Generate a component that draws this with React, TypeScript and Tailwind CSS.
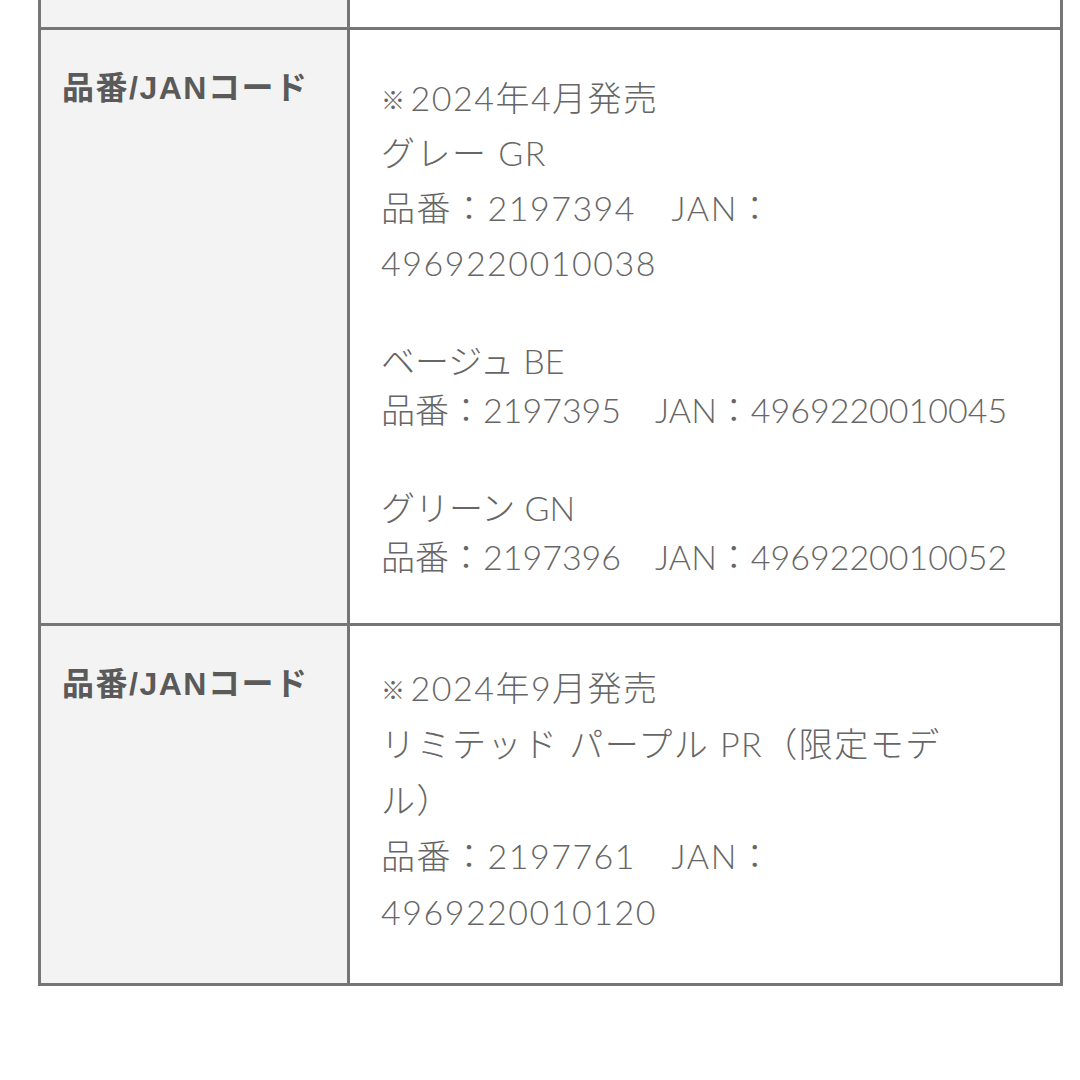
import React from "react";

const body = "font-['Lato','Noto_Sans_CJK_JP',sans-serif] font-light text-[34px] text-[#666666]";
const label = "font-['Liberation_Sans','Noto_Sans_CJK_JP',sans-serif] font-bold text-[32px] leading-[48px] text-[#5a5a5a] tracking-[1.5px]";

function Label() {
  return (
    <div className="bg-[#f3f3f3] pl-[21px] pt-[34px]">
      <div className={label}>品番/JANコード</div>
    </div>
  );
}

function Note({ children }: { children: React.ReactNode }) {
  return (
    <div>
      <span className="text-[24px] leading-none font-normal mr-[4px] relative -top-[2px]">※</span>
      {children}
    </div>
  );
}

export default function App() {
  return (
    <div className="w-[1080px] h-[1080px] bg-white overflow-hidden">
      <div className="ml-[38px] w-[1025px] border-x-[3px] border-b-[3px] border-[#767676]">
        {/* tail of previous row */}
        <div className="grid grid-cols-[306px_1fr] h-[27px]">
          <div className="bg-[#f3f3f3]" />
          <div className="border-l-[3px] border-[#767676]" />
        </div>

        {/* row 1 */}
        <div className="grid grid-cols-[306px_1fr] border-t-[3px] border-[#767676]">
          <Label />
          <div className={`border-l-[3px] border-[#767676] pl-[31px] pt-[40px] pb-[42px] ${body}`}>
            <div className="leading-[55px] tracking-[1.5px]">
              <Note>2024年4月発売</Note>
              <div>グレー GR</div>
              <div>品番：2197394　JAN：</div>
              <div>4969220010038</div>
            </div>
            <div className="h-[46px]" />
            <div className="leading-[49px]">
              <div>ベージュ BE</div>
              <div>品番：2197395　JAN：4969220010045</div>
              <div className="h-[49px]" />
              <div>グリーン GN</div>
              <div>品番：2197396　JAN：4969220010052</div>
            </div>
          </div>
        </div>

        {/* row 2 */}
        <div className="grid grid-cols-[306px_1fr] border-t-[3px] border-[#767676]">
          <Label />
          <div className={`border-l-[3px] border-[#767676] pl-[31px] pt-[34px] pb-[43px] ${body}`}>
            <div className="leading-[56px] tracking-[1.5px]">
              <Note>2024年9月発売</Note>
              <div>リミテッド パープル PR（限定モデ</div>
              <div>ル）</div>
              <div>品番：2197761　JAN：</div>
              <div>4969220010120</div>
            </div>
          </div>
        </div>
      </div>
    </div>
  );
}
